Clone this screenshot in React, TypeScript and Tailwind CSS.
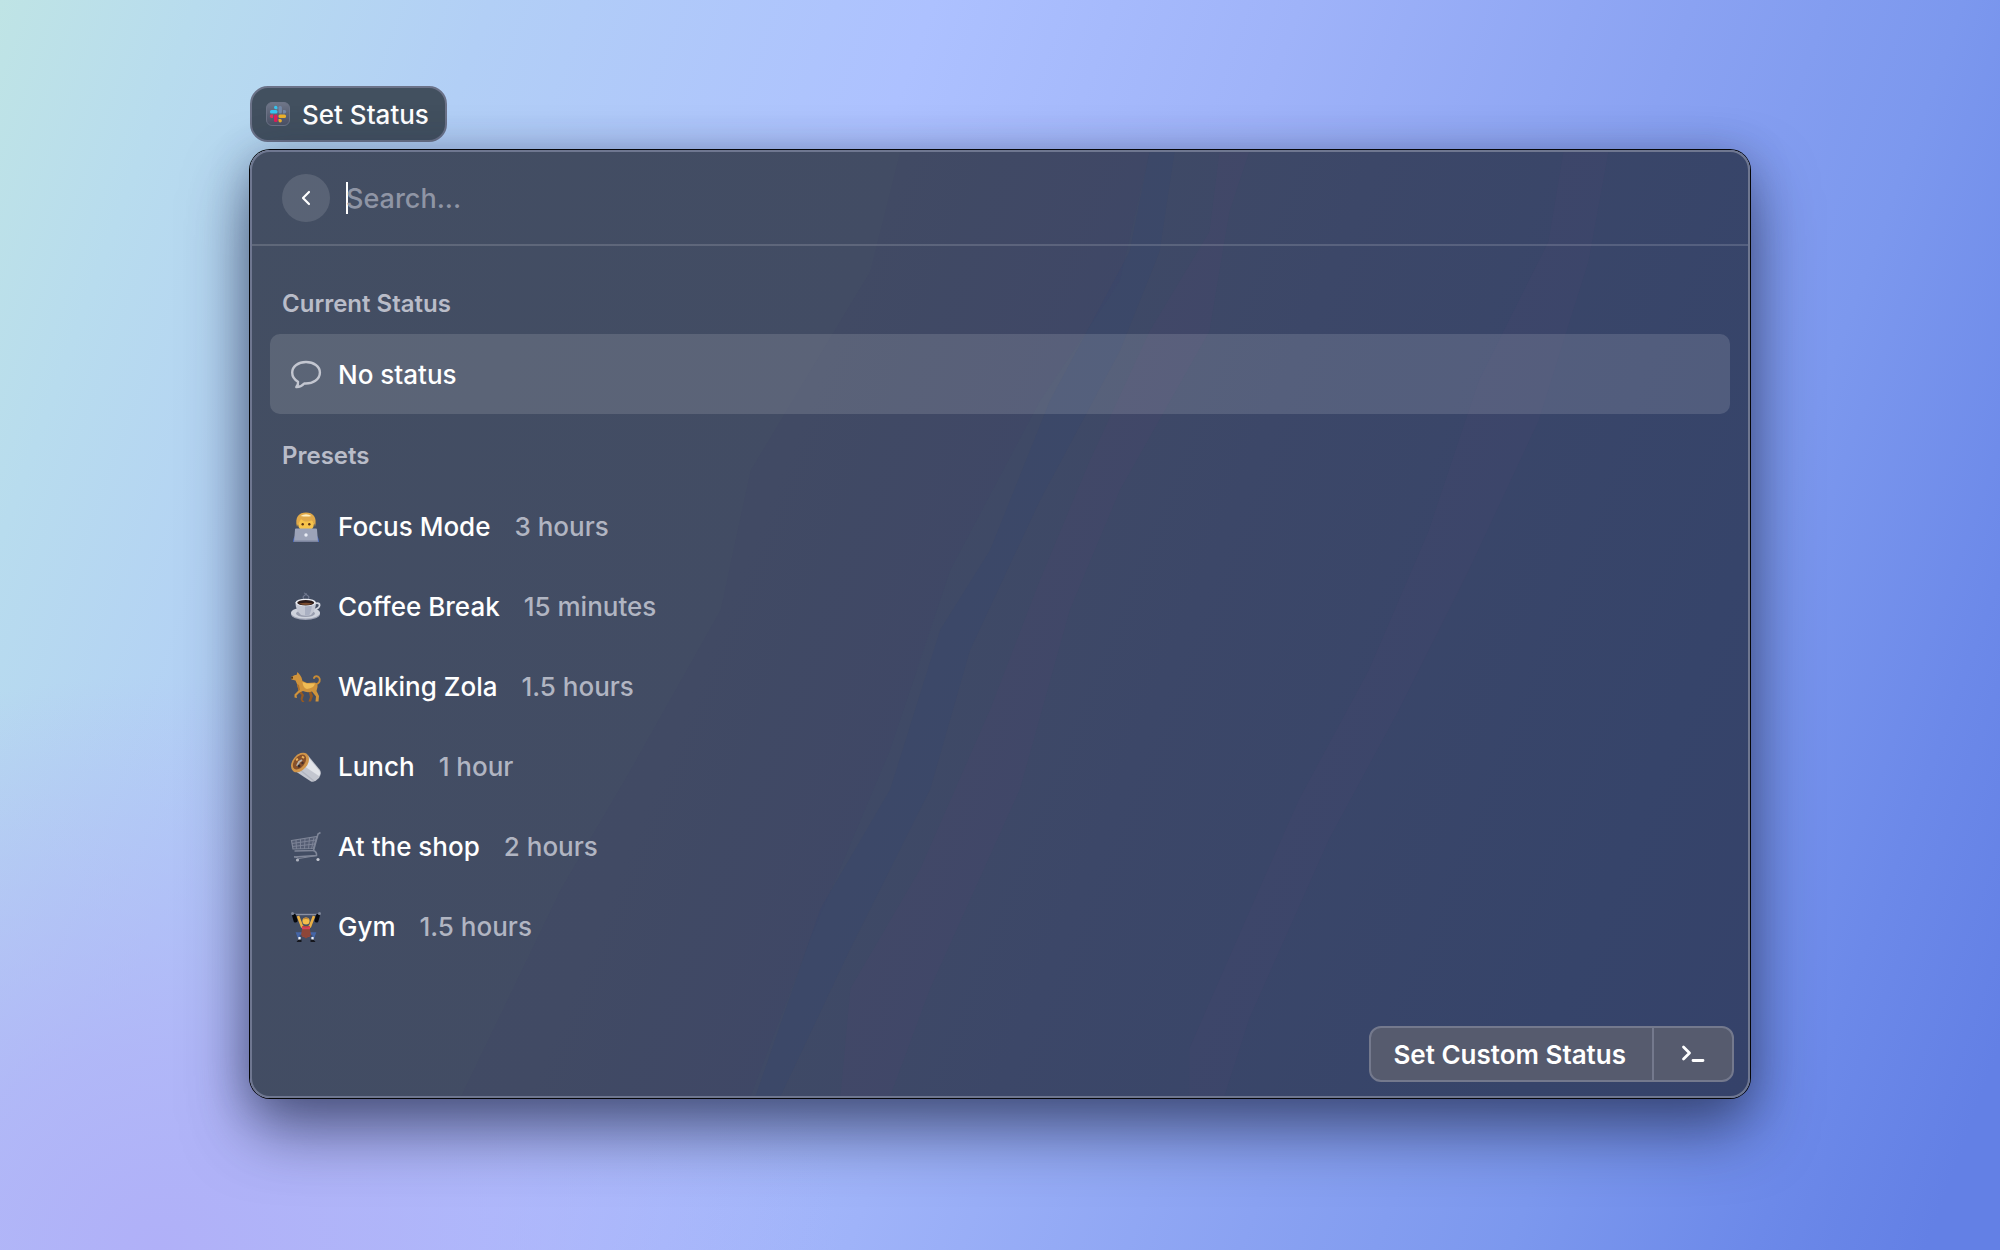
import React from "react";

type Preset = {
  title: string;
  duration: string;
  icon: React.ReactNode;
};

const SlackIcon = () => (
  <svg viewBox="0 0 24 24" className="h-6 w-6 shrink-0" aria-hidden="true">
    <defs>
      <linearGradient id="slack-tile" x1="0" y1="0" x2="0" y2="1">
        <stop offset="0" stopColor="#6f7688" />
        <stop offset="1" stopColor="#4b5266" />
      </linearGradient>
    </defs>
    <rect x="0.5" y="0.5" width="23" height="23" rx="5.5" fill="url(#slack-tile)" stroke="#6d7487" />
    <rect x="4" y="8" width="7.5" height="3.5" rx="1.5" fill="#36c5f0" />
    <path d="M8 5.5a1.7 1.7 0 0 1 3.4 0V7.2H9.7A1.7 1.7 0 0 1 8 5.5Z" fill="#36c5f0" />
    <rect x="12.5" y="4" width="3.4" height="7.5" rx="1.5" fill="#7488a8" />
    <path d="M17 8h1.5a1.7 1.7 0 0 1 0 3.4H17Z" fill="#7488a8" />
    <rect x="12.5" y="12.5" width="7.5" height="3.4" rx="1.5" fill="#ecb22e" />
    <path d="M12.5 17H14.2a1.7 1.7 0 0 1 0 3.4a1.7 1.7 0 0 1-1.7-1.7Z" fill="#ecb22e" />
    <rect x="8" y="12.5" width="3.5" height="7.5" rx="1.5" fill="#e01e5a" />
    <path d="M7 12.5H5.5a1.7 1.7 0 0 0 0 3.4H7Z" fill="#e0355f" />
  </svg>
);

const BubbleIcon = () => (
  <svg viewBox="0 0 32 32" className="h-8 w-8 shrink-0" fill="none" stroke="#c3c6d0" strokeWidth="2.4" strokeLinejoin="round" strokeLinecap="round" aria-hidden="true">
    <path d="M16 3C8.2 3 2.2 7.3 2.2 13.5C2.2 17.7 4.6 20.8 8 22.7C8.4 24.7 7.600 26.5 6.3 28.1C9.4 28.2 12.2 26.8 14.2 24.5C23 25.1 29.9 20.3 29.9 13.5C29.9 7.3 23.8 3 16 3Z" />
  </svg>
);

const TechnologistIcon = () => (
  <svg viewBox="0 0 32 32" className="h-8 w-8 shrink-0" aria-hidden="true">
    <path d="M3 31c0-5 3-8 6-9h14c3 1 6 4 6 9Z" fill="#4d6cc0" />
    <rect x="13" y="17" width="6" height="5" fill="#d99a38" />
    <ellipse cx="16" cy="12.5" rx="8" ry="8.5" fill="#f7c34b" />
    <path d="M7 16C4.5 6 9 1.5 16 1.5s11.5 4.5 9 14.5C24.5 12 23.5 10.5 21.5 9.5 17 11.5 13 10.5 11 8 10 10.5 8 12 7 16Z" fill="#e0a94a" />
    <path d="M10.5 5Q16 1.5 21.5 5Q17 6 10.5 5Z" fill="#fff0c0" />
    <circle cx="12.7" cy="13.3" r="1.2" fill="#5a3214" />
    <circle cx="19.3" cy="13.3" r="1.2" fill="#5a3214" />
    <path d="M5 18.5Q5 17.5 6 17.5H26Q27 17.5 27 18.5L28 31H4Z" fill="#9ca3b8" />
    <path d="M4 29.5H28V31H4Z" fill="#7c849e" />
    <circle cx="16" cy="24" r="1.7" fill="#e9ecf5" />
  </svg>
);

const CoffeeIcon = () => (
  <svg viewBox="0 0 32 32" className="h-8 w-8 shrink-0" aria-hidden="true">
    <path d="M14 8q-2-2 .5-3.5T14 2M18 8q2-2-.5-3.5T17 3" stroke="#6f778e" fill="none" strokeWidth="1.3" />
    <ellipse cx="15.5" cy="23" rx="14.5" ry="6" fill="#9ea3b4" />
    <ellipse cx="15.5" cy="22" rx="14.5" ry="5.5" fill="#ced2dc" />
    <ellipse cx="15.5" cy="22.5" rx="9.5" ry="3.5" fill="#989dae" />
    <path d="M25 12.5c6-2 7 4.5-2 6.5" stroke="#d3d6e0" fill="none" strokeWidth="1.8" />
    <path d="M5.5 11.5h20.5c0 6-2.5 9.5-5 12.5q-5 1.5-10 0c-3-3-5.5-6.5-5.5-12.5Z" fill="#c3c7d3" />
    <path d="M15 12h7c0 5-1 9-3 12.5h-4Z" fill="#aab0c2" />
    <ellipse cx="15.7" cy="11.5" rx="10.2" ry="3.8" fill="#eceef3" />
    <ellipse cx="15.7" cy="11.7" rx="8.5" ry="2.8" fill="#2b1b1a" />
    <path d="M9 12.5q6.5 3 13.5 0q-6.5-1.5-13.5 0Z" fill="#794b2e" />
  </svg>
);

const DogIcon = () => (
  <svg viewBox="0 0 32 32" className="h-8 w-8 shrink-0" aria-hidden="true">
    <path d="M11 20L14 24L12.5 28.5L14.5 31H12L10.5 28L11.5 24L8 21ZM21 20L23 25L21 30.5H18.5L20 26L18.5 20Z" fill="#945923" />
    <path d="M25.5 13.5C29.5 12.5 31 9 29 6.5C27.5 4.5 24.5 5 24 7" stroke="#c68a35" fill="none" strokeWidth="2" strokeLinecap="round" />
    <path d="M7.5 1L10 4L11.5 6.5L12.5 10L17 12L25 11.5Q28 12.5 27.5 16L26.5 20L29 25L28.5 30.5H25.5L26 25.5L22 20.5Q17 22 13 20L9.5 21.5L6.5 24.5L7 27L4.5 26.5L4.5 23.5L8.5 19.5L7 13L5.5 9.5L1.5 8.5L1 6L5 4L6.5 4Z" fill="#cf933c" />
    <path d="M12.5 11L17 12.5L25 12.5Q24 17 17 18Q13 17 12.5 11Z" fill="#efbc55" />
    <path d="M7 13L9 14L10 19L8.5 19.5Z" fill="#ad7029" />
    <path d="M1 6L3 5.5L3 7.5L1.5 8Z" fill="#543516" />
  </svg>
);

const BurritoIcon = () => (
  <svg viewBox="0 0 32 32" className="h-8 w-8 shrink-0" aria-hidden="true">
    <path d="M18 4.5L30 19Q32 22.5 29 27Q25 31.5 21 30.5L5 20Z" fill="#c3c6cf" />
    <path d="M18 6L29.5 20Q31 23 29 25L14 15Z" fill="#e2e4e9" />
    <path d="M9 18L24 30" stroke="#b1b5c0" strokeWidth="1.5" />
    <ellipse cx="10" cy="11.5" rx="7.5" ry="11" transform="rotate(38 10 11.5)" fill="#d0954a" />
    <ellipse cx="9.5" cy="11" rx="5.2" ry="8.5" transform="rotate(38 9.5 11)" fill="#87502a" />
    <path d="M7 15L9 11L12 9" stroke="#b9b3ab" strokeWidth="2" fill="none" />
    <path d="M12 5.5L14 7M6 9L8 8" stroke="#ecb35a" strokeWidth="2" />
    <circle cx="9" cy="15" r="1.5" fill="#34272a" />
    <circle cx="12.5" cy="12" r="1.2" fill="#47302a" />
  </svg>
);

const CartIcon = () => (
  <svg viewBox="0 0 32 32" className="h-8 w-8 shrink-0" fill="none" stroke="#7f8698" aria-hidden="true">
    <path d="M30.5 1.5L28 3L23.5 19.5L4.5 20" strokeWidth="1.6" />
    <path d="M1.5 9.5L27 5.5L23.5 17.5L3 18Z" strokeWidth="1.2" fill="#8b91a2" fillOpacity="0.25" />
    <path d="M2 12.5L26 9M2.5 15.5L25 13M6 9L6.5 18M10.5 8L10.5 18M15 7.5L14.5 18M19.5 7L18.5 18M24 6.5L21.5 18" strokeWidth="0.9" />
    <path d="M23.5 19.5Q27 21 26.5 24.5L4 26" strokeWidth="1.6" />
    <path d="M4 25.5L9 27.5L27 24.5" strokeWidth="1" />
    <circle cx="7.5" cy="29" r="1.6" fill="#aeb2be" stroke="none" />
    <circle cx="28" cy="28.5" r="1.6" fill="#c6c9d2" stroke="none" />
  </svg>
);

const LifterIcon = () => (
  <svg viewBox="0 0 32 32" className="h-8 w-8 shrink-0" aria-hidden="true">
    <path d="M3 3.5H29" stroke="#8a91a3" strokeWidth="1.4" />
    <path d="M8 5L12 15.5L16 17L20 15.5L24 5" stroke="#eab045" strokeWidth="2.6" fill="none" strokeLinejoin="round" />
    <path d="M12 15H20L19.5 26H12.5Z" fill="#b5473c" />
    <path d="M12 15Q16 18 20 15V18H12Z" fill="#d9405a" />
    <path d="M12 22.5H7.5L9.5 28M20 22.5H24.5L22.5 28" stroke="#4566a8" strokeWidth="2.6" fill="none" />
    <path d="M12 18.5H20L21 24L16 27.5L11 24Z" fill="#8d4638" />
    <path d="M9.5 26V29M22.5 26V29" stroke="#f3f4f8" strokeWidth="2.2" />
    <path d="M6.5 31H11.5V28.5H8.5ZM25.5 31H20.5V28.5H23.5Z" fill="#15171d" />
    <circle cx="16" cy="10" r="3.6" fill="#f5bd4a" />
    <path d="M12.8 8.5Q16 4.5 19.2 8.5Q16 7.5 12.8 8.5Z" fill="#c08432" />
    <rect x="2.5" y="3" width="4" height="8.5" rx="1.5" fill="#08090d" transform="rotate(-16 4.5 6)" />
    <rect x="25.5" y="3" width="4" height="8.5" rx="1.5" fill="#08090d" transform="rotate(16 27.5 6)" />
    <circle cx="2.5" cy="2.5" r="1.5" fill="#7f8799" />
    <circle cx="29.5" cy="2.5" r="1.5" fill="#7f8799" />
  </svg>
);

const presets: Preset[] = [
  { title: "Focus Mode", duration: "3 hours", icon: <TechnologistIcon /> },
  { title: "Coffee Break", duration: "15 minutes", icon: <CoffeeIcon /> },
  { title: "Walking Zola", duration: "1.5 hours", icon: <DogIcon /> },
  { title: "Lunch", duration: "1 hour", icon: <BurritoIcon /> },
  { title: "At the shop", duration: "2 hours", icon: <CartIcon /> },
  { title: "Gym", duration: "1.5 hours", icon: <LifterIcon /> },
];

// faint diagonal light bands that show through the window glass
const GlassBands = () => (
  <svg
    viewBox="0 0 1500 948"
    preserveAspectRatio="none"
    className="pointer-events-none absolute inset-0 h-full w-full"
    aria-hidden="true"
  >
    <path d="M650 0L620 120L560 220L500 320L470 460L380 620L310 740L210 948H500L560 790L640 600L700 420L790 250L870 130L900 0Z" fill="#3d4068" fillOpacity="0.14" />
    <path d="M900 0L880 100L800 250L740 400L690 480L640 640L570 760L505 948H530L600 800L680 640L720 500L790 350L870 200L910 100L925 0Z" fill="#35456c" fillOpacity="0.3" />
    <path d="M970 0L960 80L900 180L840 310L790 430L740 560L670 720L600 840L590 948H640L680 840L770 640L820 460L870 340L960 180L980 60L1000 0Z" fill="#54486e" fillOpacity="0.14" />
    <path d="M1315 0L1300 90L1230 230L1180 380L1120 520L1050 650L1010 740L940 900V948H975L1000 870L1080 690L1150 560L1220 420L1290 270L1340 110L1360 0Z" fill="#54486e" fillOpacity="0.14" />
  </svg>
);

const SectionTitle = ({ children }: { children: React.ReactNode }) => (
  <h2 className="px-3 text-2xl leading-8 font-semibold text-[#b9bcc8]">
    {children}
  </h2>
);

const App = () => {
  return (
    <div className="flex min-h-screen flex-col items-center bg-[radial-gradient(ellipse_34%_46%_at_8%_100%,#b0b0f8_0%,#b0b0f8c0_35%,#b0b0f800_100%),linear-gradient(110deg,#bfe4e5_0%,#b8dcee_8%,#b2cff6_20%,#adc1ff_38%,#9fb3f9_53%,#8aa2f2_69%,#7c98ee_80%,#6c89e9_90%,#6380e5_97%)] pt-[86px] pb-20 font-['Inter',sans-serif]">
      <div className="flex w-3/4 flex-col items-start gap-2">
        <div className="flex h-14 items-center gap-3 rounded-[18px] border-2 border-[#6b7288] bg-[#42505f] px-3.5 text-[26px] leading-8 font-medium text-white">
          <SlackIcon />
          <span className="pt-0.5 pr-0.5">Set Status</span>
        </div>

        <main className="relative w-full overflow-hidden rounded-[20px] border-2 border-[#6f7790] bg-[linear-gradient(112deg,#434e62_0%,#424c64_35%,#3c4768_60%,#36446a_88%,#35426a_100%)] shadow-[0_0_0_1px_#050609,0_32px_64px_0_rgba(28,36,68,0.62),0_4px_40px_0_rgba(40,52,90,0.3)]">
          <GlassBands />
          <div className="relative">
            <header className="flex h-[94px] items-center border-b-2 border-white/15 px-[30px]">
              <button
                type="button"
                aria-label="Back"
                className="flex h-12 w-12 shrink-0 items-center justify-center rounded-full bg-white/12"
              >
                <svg viewBox="0 0 16 16" className="h-4 w-4" fill="none" stroke="#fff" strokeWidth="2.2" strokeLinecap="round" strokeLinejoin="round">
                  <path d="M11 2L5 8L11 14" />
                </svg>
              </button>
              <span className="-mr-0.5 ml-4 h-8 w-0.5 shrink-0 bg-white" />
              <input
                type="text"
                aria-label="Search"
                placeholder="Search..."
                className="min-w-0 flex-1 bg-transparent pt-0.5 text-[27px] leading-9 font-medium caret-transparent outline-none placeholder:text-[#8f95a5]"
              />
            </header>

            <div className="px-[18px] pt-[42px]">
              <SectionTitle>Current Status</SectionTitle>
              <button
                type="button"
                className="mt-3.5 flex h-20 w-full items-center gap-4 rounded-[10px] bg-white/13 px-5 pt-0.5 text-[26px] leading-8 font-medium text-white"
              >
                <BubbleIcon />
                <span>No status</span>
              </button>

              <div className="mt-[26px]">
                <SectionTitle>Presets</SectionTitle>
              </div>
              <ul className="mt-3.5">
                {presets.map((preset) => (
                  <li key={preset.title}>
                    <button
                      type="button"
                      className="flex h-20 w-full items-center gap-4 px-5 pt-0.5 text-[26px] leading-8 font-medium text-white"
                    >
                      {preset.icon}
                      <span>{preset.title}</span>
                      <span className="ml-2 text-[#b1b5c2]">{preset.duration}</span>
                    </button>
                  </li>
                ))}
              </ul>
            </div>

            <footer className="flex justify-end px-3.5 pt-[60px] pb-3.5">
              <div className="flex h-14 overflow-hidden rounded-xl border-2 border-[#74798d] bg-[#565b6e] text-[26px] leading-8 font-semibold text-white">
                <button type="button" className="pt-0.5 pr-[26px] pl-[22px]">
                  Set Custom Status
                </button>
                <button
                  type="button"
                  aria-label="Actions"
                  className="flex w-20 items-center justify-center border-l-2 border-[#74798d]"
                >
                  <svg viewBox="0 0 24 24" className="h-6 w-6" fill="none" stroke="#fff" strokeWidth="2.8" strokeLinecap="round" strokeLinejoin="round">
                    <path d="M2.5 5L8.5 11L2.5 17M12 18.500H22" />
                  </svg>
                </button>
              </div>
            </footer>
          </div>
        </main>
      </div>
    </div>
  );
};

export default App;
